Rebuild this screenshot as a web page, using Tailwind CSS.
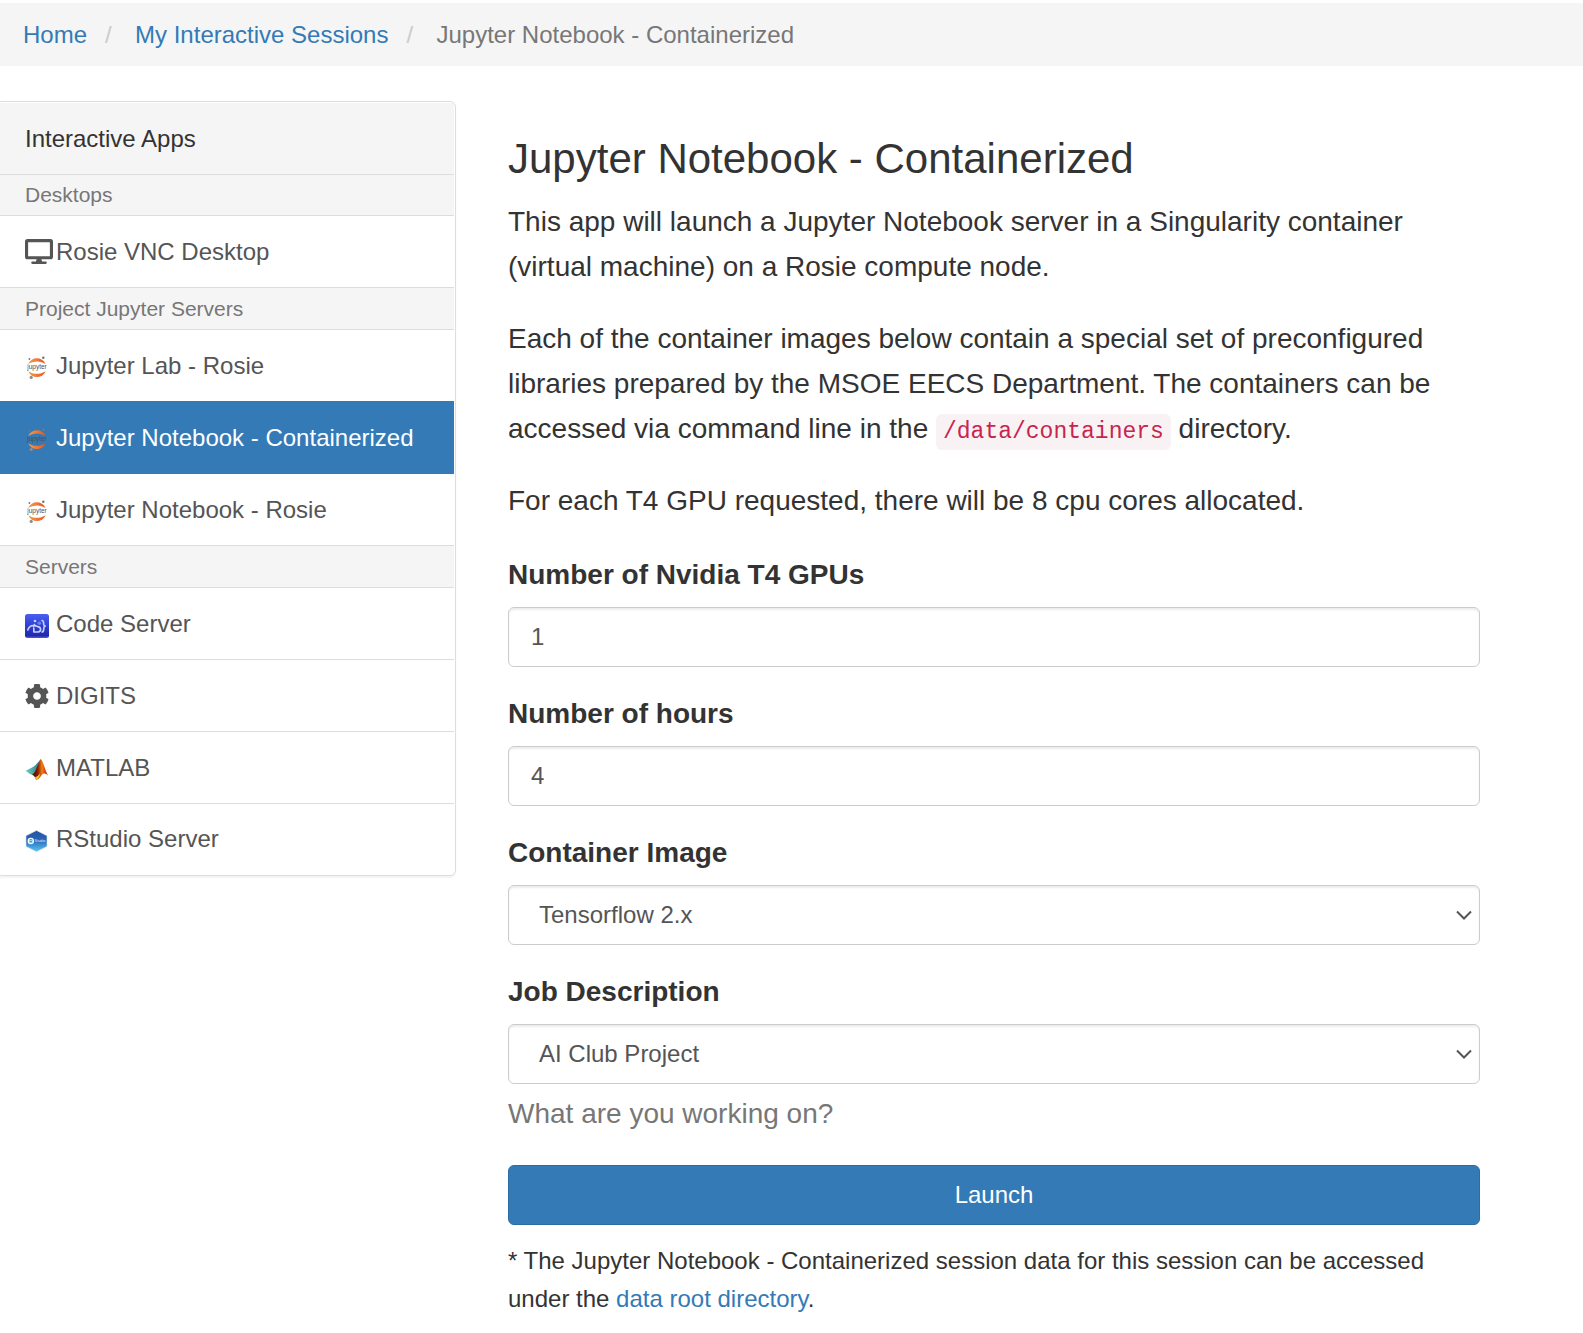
<!DOCTYPE html>
<html lang="en">
<head>
<meta charset="utf-8">
<meta name="viewport" content="width=device-width, initial-scale=1">
<title>Jupyter Notebook - Containerized</title>
<script src="https://cdn.jsdelivr.net/npm/@tailwindcss/browser@4"></script>
</head>
<body class="bg-white font-['Liberation_Sans',Arial,sans-serif] text-[#333]">

<svg class="absolute size-0" aria-hidden="true">
  <defs>
    <linearGradient id="ju" x1="0" x2="1"><stop offset="0" stop-color="#f79a4a"/><stop offset="1" stop-color="#e8561d"/></linearGradient>
    <linearGradient id="cs" x1="0" y1="0" x2="0" y2="1"><stop offset="0" stop-color="#4a5ff0"/><stop offset=".5" stop-color="#2f3fd0"/><stop offset=".9" stop-color="#1f2aa8"/><stop offset="1" stop-color="#4a5cf0"/></linearGradient>
    <linearGradient id="m1" x1="0" x2="1"><stop offset="0" stop-color="#6fd0c4"/><stop offset="1" stop-color="#2f7f86"/></linearGradient>
    <linearGradient id="m2" x1="0" x2="1"><stop offset="0" stop-color="#3a0c08"/><stop offset=".35" stop-color="#8c1d08"/><stop offset=".6" stop-color="#f08010"/><stop offset=".78" stop-color="#d84a10"/><stop offset="1" stop-color="#c02010"/></linearGradient>
    <linearGradient id="rs" x1="0" y1="0" x2="0" y2="1"><stop offset="0" stop-color="#2450a0"/><stop offset=".45" stop-color="#2a66b8"/><stop offset="1" stop-color="#58c8f0"/></linearGradient>
    <symbol id="jupyter" viewBox="0 0 24 24">
      <path d="M3.200 8C6.500 0.200 17.300 0.200 20.600 8C15.500 4.600 8.300 4.600 3.200 8Z" fill="url(#ju)"/>
      <path d="M3.200 15.200C6.500 23 17.300 23 20.600 15.200C15.500 18.600 8.300 18.600 3.200 15.200Z" fill="url(#ju)"/>
      <circle cx="18.300" cy="1.800" r="1.300" fill="#767677"/>
      <circle cx="4.400" cy="3" r="0.900" fill="#767677"/>
      <circle cx="6.200" cy="21.400" r="1.600" fill="#8e8e8f"/>
      <text x="12" y="13.300" text-anchor="middle" font-size="6.500" fill="#4d4d4d" font-family="Liberation Sans, sans-serif">jupyter</text>
    </symbol>
  </defs>
</svg>

<nav aria-label="Breadcrumb" class="mt-[3px] bg-[#f5f5f5]">
  <ol class="flex items-center px-[23px] pt-[14px] pb-[13px] text-2xl leading-[36px]">
    <li><a href="#" class="text-[#337ab7]">Home</a></li>
    <li class="flex"><span aria-hidden="true" class="w-[48px] pl-[18px] text-[#ccc]">/</span><a href="#" class="text-[#337ab7]">My Interactive Sessions</a></li>
    <li class="flex text-[#777]" aria-current="page"><span aria-hidden="true" class="w-[48px] pl-[18px] text-[#ccc]">/</span>Jupyter Notebook - Containerized</li>
  </ol>
</nav>

<div class="mt-[35px] flex items-start">
  <aside class="-ml-1 w-[460px] shrink-0 rounded-md border border-[#ddd] p-px text-2xl shadow-[0_2px_2px_rgba(0,0,0,0.05)]">
    <h2 class="flex h-[72px] items-center border-b border-[#ddd] bg-[#f5f5f5] pl-[27px]">Interactive Apps</h2>

    <h3 class="flex h-[41px] items-center border-b border-[#ddd] bg-[#f5f5f5] pl-[27px] text-[21px] text-[#777]">Desktops</h3>
    <a href="#" class="flex h-[72px] items-center border-b border-[#ddd] pl-[27px] text-[#555]">
      <span class="w-[31px]"><svg class="h-[25px] w-[28px]" viewBox="0 0 576 512" fill="currentColor"><path d="M528 0H48C21.500 0 0 21.500 0 48v320c0 26.500 21.500 48 48 48h192l-16 48h-72c-13.300 0-24 10.700-24 24s10.700 24 24 24h272c13.300 0 24-10.700 24-24s-10.700-24-24-24h-72l-16-48h192c26.500 0 48-21.500 48-48V48c0-26.500-21.500-48-48-48zm-16 352H64V64h448v288z"/></svg></span>Rosie VNC Desktop
    </a>

    <h3 class="flex h-[42px] items-center border-b border-[#ddd] bg-[#f5f5f5] pl-[27px] text-[21px] text-[#777]">Project Jupyter Servers</h3>
    <a href="#" class="flex h-[72px] items-center border-b border-[#ddd] pl-[27px] text-[#555]">
      <span class="mt-1 w-[31px]"><svg class="size-6"><use href="#jupyter"/></svg></span>Jupyter Lab - Rosie
    </a>
    <a href="#" aria-current="true" class="-mt-px flex h-[73px] items-center border-y border-[#337ab7] bg-[#337ab7] pl-[27px] text-white">
      <span class="mt-1 w-[31px]"><svg class="size-6"><use href="#jupyter"/></svg></span>Jupyter Notebook - Containerized
    </a>
    <a href="#" class="flex h-[72px] items-center border-b border-[#ddd] pl-[27px] text-[#555]">
      <span class="mt-1 w-[31px]"><svg class="size-6"><use href="#jupyter"/></svg></span>Jupyter Notebook - Rosie
    </a>

    <h3 class="flex h-[42px] items-center border-b border-[#ddd] bg-[#f5f5f5] pl-[27px] text-[21px] text-[#777]">Servers</h3>
    <a href="#" class="flex h-[72px] items-center border-b border-[#ddd] pl-[27px] text-[#555]">
      <span class="mt-1 w-[31px]"><svg class="size-6" viewBox="0 0 24 24" fill="none">
        <rect width="24" height="24" rx="2.500" fill="url(#cs)"/>
        <g stroke="#c9d0ff" stroke-width="1.600" stroke-linecap="round" stroke-linejoin="round"><path d="M2.800 16C4 12.500 7 11 10.500 11.800"/><path d="M9.500 10.500L8.500 12.500"/><path d="M8.800 14V18H13C16.500 17.500 16.500 13 12.500 12.600L10.500 11.800"/><path d="M17 6.500C19 6.500 18.500 9 18.700 10.500C18.800 11.500 19.500 12 20.300 12C19.500 12.300 18.900 13 18.800 14C18.600 16 19 18 17 18"/></g>
        <circle cx="10" cy="7" r="1.300" fill="#c9d0ff"/><circle cx="14.300" cy="9.200" r="1.800" fill="#6f80f4"/>
      </svg></span>Code Server
    </a>
    <a href="#" class="flex h-[72px] items-center border-b border-[#ddd] pl-[27px] text-[#555]">
      <span class="w-[31px]"><svg class="size-6" viewBox="8 8 496 496" fill="currentColor"><path d="M487.400 315.700l-42.600-24.600c4.300-23.200 4.300-47 0-70.200l42.600-24.600c4.900-2.800 7.100-8.600 5.500-14-11.100-35.600-30-67.800-54.700-94.600-3.800-4.100-10-5.100-14.800-2.300L380.800 110c-17.900-15.400-38.500-27.300-60.800-35.100V25.800c0-5.600-3.900-10.500-9.400-11.700-36.700-8.200-74.300-7.800-109.200 0-5.500 1.200-9.400 6.100-9.400 11.700V75c-22.200 7.900-42.800 19.800-60.800 35.100L88.700 85.500c-4.900-2.800-11-1.900-14.800 2.300-24.700 26.700-43.600 58.900-54.700 94.600-1.700 5.400.6 11.200 5.500 14L67.300 221c-4.300 23.200-4.300 47 0 70.200l-42.600 24.600c-4.900 2.800-7.100 8.600-5.500 14 11.100 35.600 30 67.800 54.700 94.600 3.800 4.100 10 5.100 14.800 2.300l42.600-24.600c17.900 15.400 38.500 27.300 60.800 35.100v49.200c0 5.600 3.900 10.500 9.400 11.700 36.700 8.200 74.300 7.800 109.200 0 5.500-1.200 9.400-6.100 9.400-11.700v-49.200c22.200-7.900 42.800-19.800 60.800-35.100l42.600 24.600c4.900 2.800 11 1.900 14.800-2.300 24.700-26.700 43.600-58.900 54.700-94.600 1.500-5.500-.7-11.300-5.600-14.100zM256 336c-44.100 0-80-35.900-80-80s35.900-80 80-80 80 35.900 80 80-35.900 80-80 80z"/></svg></span>DIGITS
    </a>
    <a href="#" class="flex h-[72px] items-center border-b border-[#ddd] pl-[27px] text-[#555]">
      <span class="mt-1 w-[31px]"><svg class="size-6" viewBox="0 0 24 24">
        <path d="M0.500 12.800L7.500 9.300C10.500 8 12.500 4.500 15 2L12 10.500L7.500 17L5 16Z" fill="url(#m1)"/>
        <path d="M7.200 16.700C10.500 14.500 12 7.500 15.500 1C17.800 1.500 20.500 14 23.500 18C20.500 15.500 18.800 14.800 17 16.700C15.200 18.800 13.500 21.500 11 21.800C10.200 19 9 17.500 7.200 16.700Z" fill="url(#m2)"/>
        <path d="M10 19C12 18.800 13.500 17.500 15 15.500L14.500 18.500C13.300 20.500 12.300 21.500 11 21.800Z" fill="#fcc81c"/>
      </svg></span>MATLAB
    </a>
    <a href="#" class="flex h-[70px] items-center pl-[27px] text-[#555]">
      <span class="mt-1 w-[31px]"><svg class="size-6" viewBox="0 0 24 24">
        <path d="M11.500 1.500L22 6.800V17.400L11.500 22.700L1 17.400V6.800Z" fill="url(#rs)" stroke="#d5deea" stroke-width="0.600"/>
        <circle cx="5.800" cy="12" r="3.200" fill="#fff"/>
        <text x="5.800" y="13.600" text-anchor="middle" font-size="4.500" font-weight="700" fill="#2a66b8" font-family="Liberation Sans, sans-serif">R</text>
        <text x="9.600" y="13.400" font-size="3.800" fill="#dff0fb" font-family="Liberation Sans, sans-serif">Studio</text>
      </svg></span>RStudio Server
    </a>
  </aside>

  <main class="mr-[103px] ml-[52px] min-w-0 flex-1 pt-[35px] text-[28px] leading-[45px]">
    <h1 class="mb-[17px] text-[42px] leading-[46px]">Jupyter Notebook - Containerized</h1>
    <div class="space-y-[27px]">
      <p>This app will launch a Jupyter Notebook server in a Singularity container (virtual machine) on a Rosie compute node.</p>
      <p>Each of the container images below contain a special set of preconfigured libraries prepared by the MSOE EECS Department. The containers can be accessed via command line in the <code class="rounded-md bg-[#f9f2f4] px-[7px] py-[5px] font-['Liberation_Mono',monospace] text-[23px] leading-none text-[#c7254e]">/data/containers</code> directory.</p>
      <p>For each T4 GPU requested, there will be 8 cpu cores allocated.</p>
    </div>

    <form class="mt-[30px]">
      <div class="mb-[25px]">
        <label for="gpus" class="mb-[10px] block leading-[44px] font-bold">Number of Nvidia T4 GPUs</label>
        <input id="gpus" type="number" value="1" class="block h-[60px] w-full rounded-md border border-[#ccc] bg-white px-[22px] pb-px text-2xl text-[#555] shadow-[inset_0_2px_2px_rgba(0,0,0,0.075)] [appearance:textfield]">
      </div>
      <div class="mb-[25px]">
        <label for="hours" class="mb-[10px] block leading-[44px] font-bold">Number of hours</label>
        <input id="hours" type="number" value="4" class="block h-[60px] w-full rounded-md border border-[#ccc] bg-white px-[22px] pb-px text-2xl text-[#555] shadow-[inset_0_2px_2px_rgba(0,0,0,0.075)] [appearance:textfield]">
      </div>
      <div class="mb-[25px]">
        <label for="image" class="mb-[10px] block leading-[44px] font-bold">Container Image</label>
        <div class="relative">
          <select id="image" class="block h-[60px] w-full appearance-none rounded-md border border-[#ccc] bg-white px-[30px] pb-px text-2xl text-[#555] shadow-[inset_0_2px_2px_rgba(0,0,0,0.075)]"><option>Tensorflow 2.x</option></select>
          <svg class="pointer-events-none absolute top-[25px] right-2 h-[10px] w-4" viewBox="0 0 16 10" fill="none" stroke="#555" stroke-width="2"><path d="M1 1.500L8 8.500L15 1.500"/></svg>
        </div>
      </div>
      <div>
        <label for="job" class="mb-[10px] block leading-[44px] font-bold">Job Description</label>
        <div class="relative">
          <select id="job" aria-describedby="job-help" class="block h-[60px] w-full appearance-none rounded-md border border-[#ccc] bg-white px-[30px] pb-px text-2xl text-[#555] shadow-[inset_0_2px_2px_rgba(0,0,0,0.075)]"><option>AI Club Project</option></select>
          <svg class="pointer-events-none absolute top-[25px] right-2 h-[10px] w-4" viewBox="0 0 16 10" fill="none" stroke="#555" stroke-width="2"><path d="M1 1.500L8 8.500L15 1.500"/></svg>
        </div>
        <p id="job-help" class="mt-2 leading-[44px] text-[#777]">What are you working on?</p>
      </div>
      <button type="submit" class="mt-[29px] block h-[60px] w-full rounded-md border border-[#2e6da4] bg-[#337ab7] text-2xl text-white">Launch</button>
    </form>

    <p class="mt-[17px] text-2xl leading-[38px]">* The Jupyter Notebook - Containerized session data for this session can be accessed under the <a href="#" class="text-[#337ab7]">data root directory</a>.</p>
  </main>
</div>
</body>
</html>
